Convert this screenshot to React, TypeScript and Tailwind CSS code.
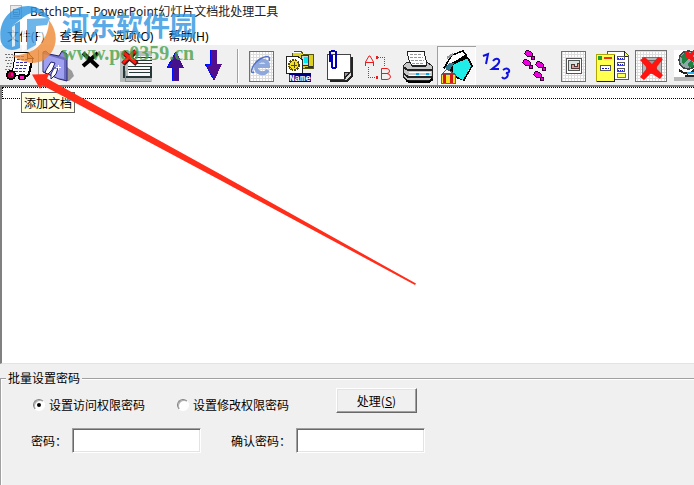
import React, { useState } from 'react'

const RED = '#ff2d1a'

function Grid({ x, y, w, h }) {
  return (
    <g>
      <rect x={x} y={y} width={w} height={h} fill="url(#grid)" stroke="#707070" />
    </g>
  )
}

function CartIcon() {
  return (
    <g>
      <path d="M5 8h8M6 11h7M5 14h7M7 17h5M6 20h5M5 23h5" stroke="#777" strokeDasharray="2 1" />
      <path d="M15 6H28L33 13L30 26L27 31L12 29L14 16Z" fill="#fff" stroke="#000" />
      <path d="M27 6V12H33Z" fill="#e8b070" stroke="#000" />
      <path d="M17 10h8M17 13h11M16 16h12M16 19h12M15 22h12M15 25h10" stroke="#3030b0" strokeDasharray="3 1" />
      <path d="M31 17L29 28L25 31" stroke="#000" strokeWidth="2" fill="none" />
      <ellipse cx="11" cy="29" rx="5" ry="5" fill="#000" />
      <ellipse cx="11" cy="29" rx="3" ry="3" fill="#b00040" />
      <rect x="11" y="27" width="2" height="3" fill="#ff00c0" />
      <ellipse cx="22" cy="31" rx="4" ry="3.5" fill="#000" />
      <rect x="20" y="30" width="4" height="3" fill="#ff20c0" />
      <path d="M38.500 4V37" stroke="#a0a0a0" />
    </g>
  )
}

function FolderIcon() {
  return (
    <g shapeRendering="auto">
      <path d="M27 20L33 25L35 30L30 35L26 35Z" fill="#9a9a9a" />
      <path d="M4 6L7 5L10 8L20 10L23 5L28 8V35L20 33L4 26Z" fill="#6c6cc0" stroke="#26266e" />
      <path d="M4.500 8L25 14V33L19 32L4.500 25Z" fill="#a0a0f0" />
      <path d="M21 10L23 6.500L27 9V12Z" fill="#8c8ce0" />
      <path d="M7 24L12 16L16 17L13 24L9 28L6 27Z" fill="#fff" stroke="#202070" />
      <path d="M12 28L15 22L19 22L17 28L12 33Z" fill="#fff" stroke="#202070" />
      <path d="M17 21.500h5M19.500 19v5" stroke="#fff" />
    </g>
  )
}

function CrossIcon() {
  return <path d="M5 7L20 21M20 7L12 14L5 20" stroke="#000" strokeWidth="4" fill="none" shapeRendering="auto" />
}

function ClearListIcon() {
  return (
    <g>
      <rect x="3" y="5" width="32" height="31" fill="#b9bfbf" />
      <rect x="11" y="10" width="24" height="21" fill="#f8f8f8" />
      <path d="M7 20V31H34V20" fill="none" stroke="#263838" strokeWidth="1.500" />
      <path d="M18 11.500h17M18 14.500h17M16 17.500h19M11 20.500h23M11 23.500h23M12 26.500h22" stroke="#263838" />
      <path d="M8 25V35H34" fill="none" stroke="#8a9292" />
      <g shapeRendering="auto">
        <path d="M6 6L20 18M19 5L6 18" stroke="#501010" strokeWidth="5" />
        <path d="M6 6L19 17M18 5L6 17" stroke="#ff1b10" strokeWidth="3" />
      </g>
    </g>
  )
}

function UpIcon() {
  return (
    <g>
      <path d="M20 5L28 22H23V35H16V22H11Z" fill="#44108c" />
      <path d="M19.500 6L11.500 21.500H16.500V35" fill="none" stroke="#0010ff" />
    </g>
  )
}

function DownIcon() {
  return (
    <g>
      <path d="M15 4H22V18H27L19 35L10 18H15Z" fill="#54108c" />
      <path d="M15.500 4V18.500H10.500L19 34" fill="none" stroke="#0010ff" />
    </g>
  )
}

function WebIcon() {
  return (
    <g>
      <Grid x={7.5} y={5.5} w={24} h={30} />
      <g shapeRendering="auto">
        <path d="M26 24C23 29 14 28 14 21C14 13 26 12 26 20H15" fill="none" stroke="#8fa8dc" strokeWidth="4" />
        <path d="M12 26C7 29 10 18 18 13C25 9 29 10 27 15" fill="none" stroke="#5472c4" strokeWidth="1.500" />
      </g>
    </g>
  )
}

function RenameIcon() {
  return (
    <g>
      <path d="M11 8L14 5H20L22 8H32V22H11Z" fill="#dcd020" stroke="#55550c" />
      <path d="M12 6H20" stroke="#fff" />
      <rect x="20.500" y="9.500" width="7" height="10" fill="#c8d8d8" stroke="#333" />
      <rect x="23" y="11" width="4" height="6" fill="#00e8f0" />
      <path d="M28 20h4v2h-9" fill="#333" />
      <path d="M5.500 10.500H17L21.500 14V27.500H5.500Z" fill="#fff" stroke="#222" />
      <circle cx="13" cy="19" r="5" fill="#f0e020" stroke="#55480c" strokeWidth="2" strokeDasharray="2 1" />
      <path d="M10 19h6M13 16v6" stroke="#55480c" />
      <rect x="8" y="27" width="22" height="9" fill="#000080" />
      <text x="19" y="35" fontSize="9" fontWeight="bold" fill="#fff" textAnchor="middle" fontFamily="Liberation Mono, monospace">Name</text>
    </g>
  )
}

function ClipIcon() {
  return (
    <g>
      <path d="M12 12H32V30L27 35H10" fill="#d8d8d8" stroke="#222" strokeWidth="2" />
      <path d="M7.500 8.500H30.500V26L24 33.500H7.500Z" fill="#fff" stroke="#444" />
      <path d="M30 26H24V33Z" fill="#999" stroke="#222" />
      <path d="M10 16V7Q10 5 13 5Q16 5 16 7V20Q16 22 14 22Q12 22 12 20V9" fill="none" stroke="#0000b8" strokeWidth="2" />
    </g>
  )
}

function ReplaceIcon() {
  return (
    <g fill="none" stroke="#e81c1c">
      <g shapeRendering="auto">
        <path d="M6.500 20V16L10 10H11L14.500 16V20M6.500 16.500H15" />
        <path d="M22.500 22.500H28Q30.500 23 30.500 25Q30.500 27.500 28 27.500Q31.500 28 31.500 31Q31 33.500 28 33.500H22.500ZM22.500 27.500H29" />
      </g>
      <path d="M17 11.500H25.500V20" strokeDasharray="1 1" />
      <path d="M18 10V13" strokeWidth="2" />
      <path d="M9.500 21V31.500H19" strokeDasharray="1 1" />
      <path d="M18 30V33" strokeWidth="2" />
    </g>
  )
}

function PrinterIcon() {
  return (
    <g>
      <path d="M9 5H26L29 19H12Z" fill="#fff" stroke="#222" />
      <path d="M12 8h12M12 11h13M13 14h13M14 17h12" stroke="#999" strokeDasharray="3 1" />
      <path d="M5 20L9 16H12L14 20H28L29 16L34 20V34H8L5 30Z" fill="#c8c8c8" stroke="#222" />
      <path d="M5 21L10 24H34M5 27L10 31H34" fill="none" stroke="#222" strokeWidth="2" />
      <path d="M11 26h22M11 29h22" stroke="#fff" />
      <path d="M18 28h3M28 28h3" stroke="#00a8f0" strokeWidth="2" />
      <path d="M8 34L11 36H31L34 33" fill="none" stroke="#000" strokeWidth="2" />
    </g>
  )
}

function PaintIcon() {
  return (
    <g>
      <path d="M12 12L22 6L30 10L33 14L35 21L31 24L28 35L18 32L13 25Z" fill="#000" />
      <path d="M7 22L15 9L26 5L29 9L18 16L13 18Z" fill="#fff" stroke="#000" strokeWidth="1.500" />
      <path d="M7 22L12 17L17 17L13 24Z" fill="#2e7a90" />
      <path d="M16 19L31 12L34 20L26 34L16 28Z" fill="#20ece8" />
      <path d="M31 12L35 20L27 34" fill="none" stroke="#000" strokeWidth="1.500" />
      <path d="M10 12L16 8" stroke="#999" strokeWidth="2" />
      <rect x="4" y="28" width="14" height="9" fill="#ffe020" stroke="#666" />
      <path d="M7 28v9M14 28v9" stroke="#d01818" strokeWidth="3" />
      <path d="M6 27L10 23L16 27Z" fill="#f4f4f4" stroke="#555" />
    </g>
  )
}

function NumbersIcon() {
  return (
    <g fill="none" stroke="#1010e0" strokeWidth="2" shapeRendering="auto">
      <path d="M7 10L12 8L10 18" />
      <path d="M17 15Q19 12 22 13Q25 15 21 19L16 23H23" />
      <path d="M27 24Q31 21 33 24Q34 27 30 27Q33 28 31 31Q28 34 26 31" />
    </g>
  )
}

const steps = [[14, 9], [12, 18], [25, 20], [23, 30]]

function StepsIcon() {
  return (
    <g fill="#f000e0" stroke="#300030">
      {steps.map(([x, y]) => (
        <g key={x}>
          <ellipse cx={x - 1} cy={y - 1} rx="4" ry="2.800" transform={`rotate(28 ${x} ${y})`} />
          <circle cx={x + 4} cy={y + 3} r="1.800" />
        </g>
      ))}
    </g>
  )
}

function FrameIcon() {
  return (
    <g>
      <Grid x={7.5} y={5.5} w={24} h={30} />
      <rect x="12.500" y="12.500" width="15" height="15" fill="#fff" stroke="#555" />
      <rect x="14.500" y="14.500" width="11" height="10" fill="#d8e4e4" stroke="#555" />
      <path d="M17 18h3v2h3v-3h2v5h-8z" fill="#e0a090" stroke="#503838" />
    </g>
  )
}

function FormsIcon() {
  return (
    <g>
      <path d="M14.500 5.500H31L35.500 10V33.500H14.500Z" fill="#fff" stroke="#555" />
      <path d="M31 5V10H35" fill="#ffff30" stroke="#222" />
      <path d="M24 12h8M24 18h8M24 24h8" stroke="#555" strokeWidth="4" />
      <path d="M25 12h6M25 18h6M25 24h6" stroke="#fff" strokeWidth="2" />
      <path d="M25 12h6M25 18h6M25 24h6" stroke="#1010d0" strokeDasharray="1 1" />
      <rect x="24.500" y="27.500" width="8" height="4" fill="#ffff60" stroke="#777" />
      <rect x="3.500" y="8.500" width="18" height="27" fill="#ffff50" stroke="#b0a800" />
      <path d="M21.500 9V35.500H4" fill="none" stroke="#222" />
      <rect x="5" y="10" width="4" height="4" fill="#20a030" />
      <path d="M11 12h8" stroke="#f03010" strokeWidth="2" />
      <rect x="7.500" y="19.500" width="10" height="5" fill="#fff" stroke="#555" />
      <path d="M9 22h7" stroke="#1010d0" strokeDasharray="2 1" />
    </g>
  )
}

function RemoveIcon() {
  return (
    <g>
      <Grid x={3.5} y={4.5} w={31} h={31} />
      <rect x="10" y="11" width="19" height="16" fill="#b8b8b8" stroke="#777" />
      <rect x="14" y="14" width="10" height="9" fill="#999" stroke="#666" />
      <path d="M8 14L13 11L20 18L26 11L31 13L24 22L31 29L28 33L19 27L12 34L8 31L15 22Z" fill="#ff1410" shapeRendering="auto" />
    </g>
  )
}

function GlobeIcon() {
  return (
    <g>
      <rect x="3" y="4" width="36" height="27" fill="#fff" />
      <rect x="3" y="31" width="36" height="4" fill="#b8b8b8" />
      <circle cx="17" cy="14" r="9" fill="#8ca8a8" stroke="#444" strokeWidth="1.500" />
      <path d="M10 10L15 7L17 13L12 19ZM17 17L21 14L23 20L18 22Z" fill="#208040" />
      <path d="M14 6L24 15M25 5L16 12" stroke="#f01818" strokeWidth="4" />
      <path d="M8 24Q18 32 25 22M14 30h10" fill="none" stroke="#222" strokeWidth="2" />
      <path d="M16 27h8" stroke="#30b0f0" strokeWidth="2" />
    </g>
  )
}

const fileTools = [
  { name: '添加文档', icon: CartIcon },
  { name: '添加文件夹', icon: FolderIcon },
  { name: '删除', icon: CrossIcon },
  { name: '清空列表', icon: ClearListIcon },
  { name: '上移', icon: UpIcon },
  { name: '下移', icon: DownIcon },
]

const batchTools = [
  { name: '网页', icon: WebIcon },
  { name: '重命名', icon: RenameIcon },
  { name: '附件', icon: ClipIcon },
  { name: '替换', icon: ReplaceIcon },
  { name: '打印', icon: PrinterIcon },
  { name: '密码', icon: PaintIcon, active: true },
  { name: '编号', icon: NumbersIcon },
  { name: '步骤', icon: StepsIcon },
  { name: '边框', icon: FrameIcon },
  { name: '表单', icon: FormsIcon },
  { name: '移除', icon: RemoveIcon },
  { name: '链接', icon: GlobeIcon },
]

function ToolButton({ tool }) {
  const Icon = tool.icon
  return (
    <button
      type="button"
      aria-label={tool.name}
      className={
        tool.active
          ? 'size-[39px] shrink-0 bg-[#f8f8f8] shadow-[inset_1px_1px_0_#a0a0a0,inset_-1px_-1px_0_#fff]'
          : 'size-[39px] shrink-0'
      }
    >
      <svg viewBox="0 0 39 39" className="size-full" fill="none" shapeRendering="crispEdges">
        <Icon />
      </svg>
    </button>
  )
}

function Patterns() {
  return (
    <svg className="absolute size-0" aria-hidden="true">
      <defs>
        <pattern id="grid" width="3" height="3" patternUnits="userSpaceOnUse">
          <rect width="3" height="3" fill="#dcdcdc" />
          <rect width="2" height="2" fill="#fff" />
        </pattern>
      </defs>
    </svg>
  )
}

function Watermark() {
  return (
    <div className="pointer-events-none absolute top-[5px] left-0 flex">
      <svg viewBox="0 0 56 58" className="h-[58px] w-14 opacity-80" aria-hidden="true">
        <path d="M1 37C-3 17 10 1 28 1C38 1 46 7 50 14L41 11C39 6 31 7 25 11L8 24Z" fill="#2b93e0" />
        <path d="M1 37C0 28 4 24 9 22L20 16V43C12 47 4 45 1 37Z" fill="#2b93e0" />
        <path d="M22 17L26 14V44L22 47Z" fill="#fff" />
        <path d="M27 14L50 13L47 20L36 21V40L27 45Z" fill="#4aa3e6" />
        <path d="M12 22L15 20V41L12 42Z" fill="#fff" opacity="0.8" />
        <path d="M49 15C61 31 56 48 42 56C33 60 20 57 12 50C29 52 49 39 49 15Z" fill="#f08a35" />
        <path d="M38 27L46 24C45 34 40 42 32 46L38 37Z" fill="#fff" opacity="0.8" />
      </svg>
      <div className="flex flex-col pl-1.5 whitespace-nowrap">
        <span className="font-['Noto_Sans_CJK_SC',sans-serif] text-[27px] leading-10 font-bold text-[#2b93e0]/80">河东软件园</span>
        <span className="font-['Liberation_Serif',serif] text-xl leading-4 font-bold text-[#46a046]/80">www.pc0359.cn</span>
      </div>
    </div>
  )
}

function Arrow() {
  return (
    <svg viewBox="0 0 384 211" className="pointer-events-none absolute top-[74px] left-8 h-[211px] w-[384px]" aria-hidden="true">
      <path d="M0 0.500L17 0L15 4.500L188 100L384 209.500L383 211L188 106L10 11L8 15Z" fill={RED} />
    </svg>
  )
}

const menus = ['文件(F)', '查看(V)', '选项(O)', '帮助(H)']

const radioClass =
  "grid size-3 appearance-none place-items-center rounded-full border border-t-[#808080] border-l-[#808080] border-r-white border-b-white bg-white shadow-[inset_1px_1px_0_#b0b0b0] checked:before:size-1 checked:before:rounded-full checked:before:bg-black checked:before:content-['']"
const inputClass =
  'h-[25px] w-[129px] border border-t-[#a0a0a0] border-l-[#a0a0a0] border-r-white border-b-white bg-white px-1 shadow-[inset_1px_1px_0_#696969,inset_-1px_-1px_0_#e3e3e3] outline-none'

function PasswordPanel() {
  const [mode, setMode] = useState('open')
  const [password, setPassword] = useState('')
  const [confirm, setConfirm] = useState('')

  return (
    <div className="bg-[#f0f0f0] pt-1">
      <fieldset className="border-t border-l border-[#a0a0a0] pb-8 shadow-[inset_1px_1px_0_#fff]">
        <legend className="ml-[5px] bg-[#f0f0f0] px-0.5 leading-5">批量设置密码</legend>
        <div className="flex items-end pl-8">
          <label className="flex w-36 items-center gap-1">
            <input type="radio" name="mode" className={radioClass} checked={mode === 'open'} onChange={() => setMode('open')} />
            设置访问权限密码
          </label>
          <label className="flex w-[159px] items-center gap-1">
            <input type="radio" name="mode" className={radioClass} checked={mode === 'edit'} onChange={() => setMode('edit')} />
            设置修改权限密码
          </label>
          <button
            type="button"
            className="h-[25px] w-[81px] border border-t-white border-l-white border-r-[#696969] border-b-[#696969] bg-[#f0f0f0] leading-4 shadow-[inset_-1px_-1px_0_#a0a0a0,inset_1px_1px_0_#e3e3e3]"
          >
            处理(<span className="underline">S</span>)
          </button>
        </div>
        <div className="flex items-center pt-[15px] pl-[30px]">
          <label htmlFor="password" className="w-[41px]">密码：</label>
          <input id="password" type="password" className={inputClass} value={password} onChange={(e) => setPassword(e.target.value)} />
          <label htmlFor="confirm" className="ml-[30px] w-[65px]">确认密码：</label>
          <input id="confirm" type="password" className={inputClass} value={confirm} onChange={(e) => setConfirm(e.target.value)} />
        </div>
      </fieldset>
    </div>
  )
}

function App() {
  return (
    <div className="relative flex min-h-screen flex-col overflow-hidden bg-white font-['Noto_Sans_CJK_SC',sans-serif] text-xs text-black">
      <Patterns />
      <header className="flex h-6 items-center gap-2 pl-2.5 font-['Noto_Sans','Noto_Sans_CJK_SC',sans-serif] text-[#222]">
        <svg viewBox="0 0 12 14" className="h-3.5 w-3 opacity-60" shapeRendering="crispEdges" aria-hidden="true">
          <rect x="0.500" y="0.500" width="11" height="13" fill="#ddd" stroke="#888" />
          <rect x="3" y="4" width="6" height="5" fill="#fff" stroke="#444" />
          <path d="M4 7h4M3 11h6" stroke="#444" />
        </svg>
        <h1>BatchPPT - PowerPoint幻灯片文档批处理工具</h1>
      </header>
      <nav className="flex h-[21px] items-end gap-[15px] pl-[7px] font-['Noto_Sans','Noto_Sans_CJK_SC',sans-serif] whitespace-nowrap">
        {menus.map((menu) => (
          <button key={menu} type="button">{menu}</button>
        ))}
      </nav>
      <div className="flex h-10 items-end overflow-hidden bg-[#f0f0f0]">
        {fileTools.map((tool) => (
          <ToolButton key={tool.name} tool={tool} />
        ))}
        <div className="mx-[3px] mb-0.5 h-[34px] w-0.5 shrink-0 border-l border-[#a0a0a0] bg-white" />
        {batchTools.map((tool) => (
          <ToolButton key={tool.name} tool={tool} />
        ))}
      </div>
      <main className="flex-1 border-t-2 border-b border-l-2 border-t-[#808080] border-b-[#e3e3e3] border-l-[#808080]">
        <div className="h-3 border-y border-l border-dotted border-black" />
      </main>
      <PasswordPanel />
      <div role="tooltip" className="absolute top-[92px] left-[21px] border border-[#646464] bg-[#ffffe1] px-0.5 leading-[19px]">
        添加文档
      </div>
      <Watermark />
      <Arrow />
    </div>
  )
}

export default App
